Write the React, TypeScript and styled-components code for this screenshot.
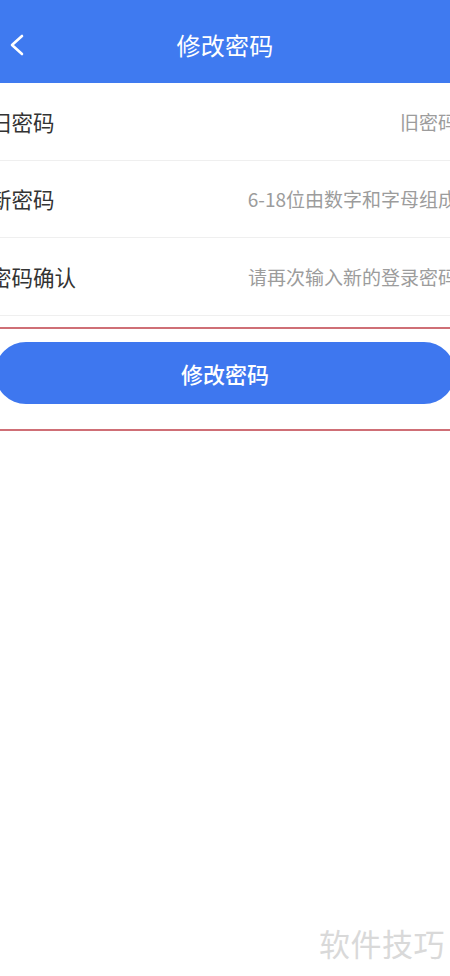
import React from "react";
import styled, { createGlobalStyle } from "styled-components";

const GlobalStyle = createGlobalStyle`
  html, body {
    margin: 0;
    padding: 0;
    background: #ffffff;
    overflow: hidden;
  }
  body {
    font-family: "Noto Sans CJK SC", "Noto Sans", sans-serif;
  }
  * { box-sizing: border-box; }
`;

const Page = styled.div`
  position: relative;
  width: 450px;
  height: 976px;
  overflow: hidden;
  display: flex;
  flex-direction: column;
  background: #ffffff;
`;

const Header = styled.header`
  height: 83px;
  padding-top: 7px;
  background: #3f7af0;
  display: grid;
  grid-template-columns: 1fr auto 1fr;
  align-items: center;
`;

const BackButton = styled.div`
  display: flex;
  align-items: center;
  padding-left: 9px;
`;

const Title = styled.h1`
  margin: 0;
  font-size: 24px;
  font-weight: 400;
  color: #ffffff;
  line-height: 1;
  letter-spacing: 0.3px;
`;

const Form = styled.div`
  margin: 0 -10px;
  display: flex;
  flex-direction: column;
`;

const Row = styled.div`
  height: 77.5px;
  display: flex;
  align-items: center;
  padding-right: 3px;
  border-bottom: 1px solid #efefef;
`;

const Label = styled.span`
  font-size: 21.5px;
  color: #333333;
  white-space: nowrap;
  line-height: 1;
`;

const Hint = styled.span`
  margin-left: auto;
  flex: 0 0 209px;
  text-align: right;
  white-space: nowrap;
  font-size: 19px;
  color: #9c9c9c;
  line-height: 1;
`;

const ButtonArea = styled.div`
  margin-top: 11px;
  border-top: 2px solid #cf6f76;
  border-bottom: 2px solid #cf6f76;
  padding: 13px 0 25px;
  display: flex;
`;

const SubmitButton = styled.button`
  flex: 1;
  margin: 0 -5px;
  height: 62px;
  border: none;
  border-radius: 31px;
  background: #3e77ef;
  color: #ffffff;
  font-family: "Noto Sans CJK SC", "Noto Sans", sans-serif;
  font-size: 22px;
  font-weight: 500;
  display: flex;
  align-items: center;
  justify-content: center;
  padding: 0;
`;

const Watermark = styled.div`
  position: absolute;
  right: 5px;
  bottom: 18px;
  font-size: 31px;
  line-height: 1;
  color: #d9d9d9;
  letter-spacing: 0.5px;
`;

const rows = [
  { label: "旧密码", hint: "旧密码" },
  { label: "新密码", hint: "6-18位由数字和字母组成" },
  { label: "密码确认", hint: "请再次输入新的登录密码" },
];

export default function App() {
  return (
    <>
      <GlobalStyle />
      <Page>
        <Header>
          <BackButton>
            <svg width="16" height="22" viewBox="0 0 16 22" fill="none">
              <polyline
                points="13,2 3,11 13,20"
                stroke="#ffffff"
                strokeWidth="2.6"
                strokeLinecap="round"
                strokeLinejoin="round"
              />
            </svg>
          </BackButton>
          <Title>修改密码</Title>
          <div />
        </Header>
        <Form>
          {rows.map((r) => (
            <Row key={r.label}>
              <Label>{r.label}</Label>
              <Hint>{r.hint}</Hint>
            </Row>
          ))}
        </Form>
        <ButtonArea>
          <SubmitButton>修改密码</SubmitButton>
        </ButtonArea>
        <Watermark>软件技巧</Watermark>
      </Page>
    </>
  );
}
